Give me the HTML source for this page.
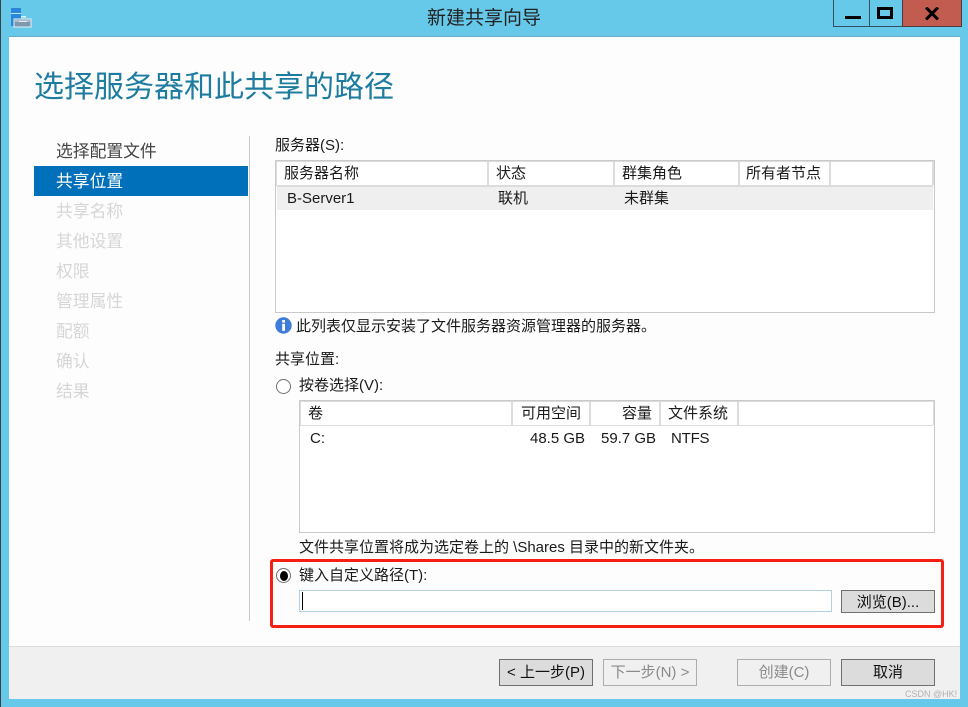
<!DOCTYPE html>
<html lang="zh">
<head>
<meta charset="utf-8">
<style>
html,body{margin:0;padding:0;background:#67c9ea;}
body{width:968px;height:707px;position:relative;overflow:hidden;font-family:"Liberation Sans","Noto Sans CJK SC",sans-serif;font-size:15px;color:#1a1a1a;}
div,span{position:absolute;box-sizing:border-box;}
.t{white-space:nowrap;line-height:20px;height:20px;transform:translateY(1px);}
.nav{left:56px;font-size:16.8px;line-height:22px;height:22px;color:#d6d6d6;white-space:nowrap;transform:translateY(1px);}
.line{background:#dcdcdc;}
.btn{border:1px solid #a9a9a9;text-align:center;height:27px;width:94px;top:659px;line-height:26px;font-size:15px;white-space:nowrap;}
.on{background:#dcdcdc;border:1px solid #707070;color:#111;}
.off{background:#f0f0f0;border:1px solid #adadad;color:#8a8a8a;}
</style>
</head>
<body>
<div style="left:0;top:0;width:1px;height:707px;background:#3a3f44"></div>

<svg style="position:absolute;left:10px;top:7px" width="22" height="21" viewBox="0 0 22 21">
<rect x="1" y="1" width="10" height="18" fill="#2a86d8"/>
<rect x="1" y="6" width="10" height="1" fill="#bfe2f5"/>
<rect x="11" y="9" width="5" height="1.5" fill="#e4f4fb"/>
<rect x="4" y="12" width="17" height="8" fill="#7d98ad" stroke="#e4f2f8" stroke-width="1"/>
<rect x="5" y="13" width="15" height="2" fill="#a9bccb"/>
<rect x="9" y="14" width="8" height="1" fill="#e6edf2"/>
</svg>

<div class="t" style="left:0;width:968px;top:6px;height:24px;line-height:24px;text-align:center;font-size:19px;color:#222">新建共享向导</div>

<!-- window buttons -->
<div style="left:833px;top:0;width:36px;height:27px;border:1px solid #33505e;border-top:0;border-right:0"></div>
<div style="left:869px;top:0;width:34px;height:27px;border:1px solid #33505e;border-top:0;border-right:0"></div>
<div style="left:902px;top:0;width:60px;height:27px;background:#c35c50;border:1px solid #4d3d3d;border-top:0"></div>
<div style="left:845px;top:16px;width:16px;height:3px;background:#000"></div>
<div style="left:877px;top:7px;width:16px;height:12px;border:3px solid #000"></div>
<svg style="position:absolute;left:925px;top:7px" width="14" height="13" viewBox="0 0 14 13"><path d="M1 0.5 L13 12.5 M13 0.5 L1 12.5" stroke="#000" stroke-width="3" fill="none"/></svg>

<!-- client -->
<div style="left:9px;top:37px;width:951px;height:662px;background:#fdfdfd;box-shadow:0 -1px 0 #6fa9c2"></div>
<div style="left:9px;top:646px;width:951px;height:53px;background:#f0f0f0;border-top:1px solid #dcdcdc"></div>

<div class="t" style="left:34px;top:67px;height:40px;line-height:40px;font-size:30px;color:#1d7c9f">选择服务器和此共享的路径</div>

<!-- nav -->
<div style="left:249px;top:136px;width:1px;height:485px;background:#c8c8c8"></div>
<div style="left:34px;top:166px;width:214px;height:30px;background:#0070bb"></div>
<div class="nav" style="top:140px;color:#444">选择配置文件</div>
<div class="nav" style="top:170px;color:#fff">共享位置</div>
<div class="nav" style="top:200px">共享名称</div>
<div class="nav" style="top:230px">其他设置</div>
<div class="nav" style="top:260px">权限</div>
<div class="nav" style="top:290px">管理属性</div>
<div class="nav" style="top:320px">配额</div>
<div class="nav" style="top:350px">确认</div>
<div class="nav" style="top:380px">结果</div>

<!-- server table -->
<div class="t" style="left:275px;top:135px">服务器(S):</div>
<div style="left:275px;top:160px;width:660px;height:153px;background:#fff;border:1px solid #c9c9c9"></div>
<div class="line" style="left:276px;top:161px;width:658px;height:1px"></div>
<div class="line" style="left:276px;top:161px;width:1px;height:25px"></div>
<div class="line" style="left:277px;top:185px;width:656px;height:2px"></div>
<div class="line" style="left:487px;top:162px;width:2px;height:23px"></div>
<div class="line" style="left:613px;top:162px;width:2px;height:23px"></div>
<div class="line" style="left:738px;top:162px;width:2px;height:23px"></div>
<div class="line" style="left:829px;top:162px;width:2px;height:23px"></div>
<div class="line" style="left:932px;top:162px;width:2px;height:23px"></div>
<div style="left:277px;top:187px;width:656px;height:23px;background:#efefef"></div>
<div class="t" style="left:284px;top:163px">服务器名称</div>
<div class="t" style="left:496px;top:163px">状态</div>
<div class="t" style="left:622px;top:163px">群集角色</div>
<div class="t" style="left:746px;top:163px">所有者节点</div>
<div class="t" style="left:287px;top:188px">B-Server1</div>
<div class="t" style="left:498px;top:188px">联机</div>
<div class="t" style="left:624px;top:188px">未群集</div>

<!-- info -->
<svg style="position:absolute;left:275px;top:317px" width="17" height="17" viewBox="0 0 17 17"><circle cx="8.5" cy="8.5" r="8.2" fill="#3f7bd8"/><rect x="7.2" y="3" width="2.8" height="2.6" fill="#fff"/><rect x="7.2" y="6.8" width="2.8" height="7" fill="#fff"/></svg>
<div class="t" style="left:296px;top:316px">此列表仅显示安装了文件服务器资源管理器的服务器。</div>

<div class="t" style="left:275px;top:349px">共享位置:</div>

<!-- radio 1 -->
<div style="left:276px;top:379px;width:15px;height:15px;border-radius:50%;background:#fff;border:1px solid #6f6f6f"></div>
<div class="t" style="left:299px;top:375px">按卷选择(V):</div>

<!-- volume table -->
<div style="left:299px;top:400px;width:636px;height:133px;background:#fff;border:1px solid #c9c9c9"></div>
<div class="line" style="left:300px;top:401px;width:634px;height:1px"></div>
<div class="line" style="left:300px;top:401px;width:1px;height:25px"></div>
<div class="line" style="left:301px;top:425px;width:632px;height:1px"></div>
<div class="line" style="left:511px;top:402px;width:2px;height:23px"></div>
<div class="line" style="left:589px;top:402px;width:2px;height:23px"></div>
<div class="line" style="left:659px;top:402px;width:2px;height:23px"></div>
<div class="line" style="left:737px;top:402px;width:2px;height:23px"></div>
<div class="line" style="left:933px;top:402px;width:1px;height:23px"></div>
<div class="t" style="left:308px;top:403px">卷</div>
<div class="t" style="left:521px;top:403px">可用空间</div>
<div class="t" style="left:622px;top:403px">容量</div>
<div class="t" style="left:668px;top:403px">文件系统</div>
<div class="t" style="left:310px;top:428px">C:</div>
<div class="t" style="left:530px;top:428px">48.5 GB</div>
<div class="t" style="left:601px;top:428px">59.7 GB</div>
<div class="t" style="left:671px;top:428px;letter-spacing:-.2px">NTFS</div>

<div class="t" style="left:299px;top:537px">文件共享位置将成为选定卷上的 \Shares 目录中的新文件夹。</div>

<!-- radio 2 -->
<div style="left:276px;top:568px;width:15px;height:15px;border-radius:50%;background:#fff;border:1px solid #6f6f6f"></div>
<div style="left:280px;top:571px;width:8px;height:10px;border-radius:50%;background:#000"></div>
<div class="t" style="left:299px;top:565px">键入自定义路径(T):</div>

<!-- input -->
<div style="left:299px;top:590px;width:533px;height:22px;background:#fff;border:1px solid #b3cfe4"></div>
<div style="left:302px;top:592px;width:1px;height:18px;background:#000"></div>
<div class="btn on" style="left:841px;top:590px;height:23px;line-height:23px">浏览(B)...</div>

<!-- red box -->
<div style="left:270px;top:559px;width:674px;height:69px;border:3px solid #f51f14;border-radius:3px"></div>

<!-- footer buttons -->
<div class="btn on" style="left:499px">&lt; 上一步(P)</div>
<div class="btn off" style="left:603px">下一步(N) &gt;</div>
<div class="btn off" style="left:737px">创建(C)</div>
<div class="btn on" style="left:841px">取消</div>

<div class="t" style="left:905px;top:686px;height:14px;line-height:14px;font-size:9px;color:#b0b0b0">CSDN @HK!</div>
</body>
</html>
